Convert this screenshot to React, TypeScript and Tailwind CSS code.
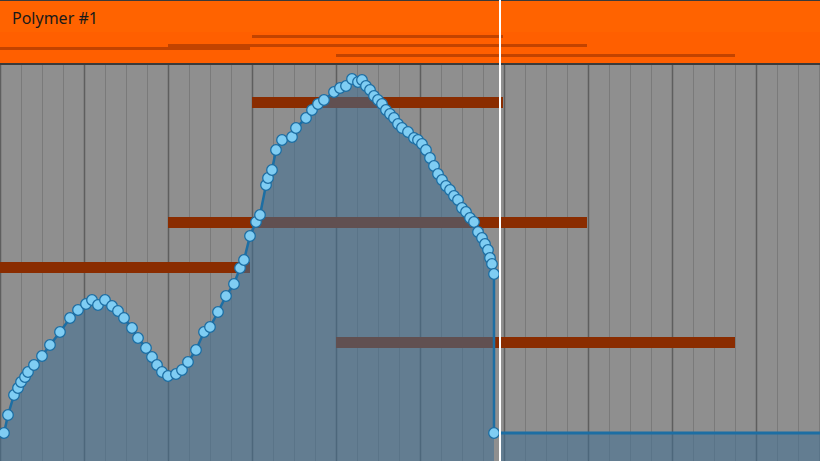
const pts: [number, number][] = [
  [4, 433], [8, 415], [14, 395], [18, 388], [21, 382], [25, 377], [28, 372], [34, 365], [42, 356], [50, 345],
  [60, 332], [70, 318], [78, 310], [86, 304], [92, 300], [98, 305], [105, 300], [112, 306], [118, 311],
  [124, 318], [132, 328], [138, 338], [146, 348], [152, 357], [157, 365], [162, 372], [168, 376], [176, 374],
  [182, 370], [188, 362], [196, 350], [204, 332], [210, 327], [218, 312], [226, 296], [234, 284], [240, 268],
  [244, 260], [250, 236], [256, 222], [260, 215], [266, 185], [268, 178], [272, 170], [276, 150], [282, 140],
  [292, 137], [296, 128], [306, 118], [312, 110], [318, 104], [324, 100], [334, 92], [340, 88], [346, 86],
  [352, 79], [358, 82], [362, 80], [366, 86], [370, 90], [374, 96], [378, 100], [382, 104], [386, 110],
  [390, 114], [394, 118], [398, 124], [402, 128], [408, 132], [414, 138], [418, 140], [422, 144], [426, 150],
  [430, 158], [434, 166], [438, 174], [442, 180], [446, 186], [450, 190], [454, 196], [458, 200], [462, 208],
  [466, 212], [470, 218], [474, 222], [478, 232], [482, 238], [485, 244], [488, 250], [490, 258], [492, 264],
  [494, 274],
];

const notes = [
  { x1: 252, x2: 503, y: 97, hy: 36 },
  { x1: 168, x2: 587, y: 217, hy: 45 },
  { x1: 0, x2: 250, y: 262, hy: 48 },
  { x1: 336, x2: 735, y: 337, hy: 55 },
];

const lines = Array.from({ length: 40 }, (_, i) => i * 21);

export default function App() {
  const line = pts.map(([x, y]) => `${x},${y}`).join(" ");
  const area = `M0,461 L0,433 L${line.split(" ").join(" L")} L494,433 L494,461 Z M500,433 L820,433 L820,461 L500,461 Z`;
  return (
    <div className="relative w-[820px] h-[461px] overflow-hidden flex flex-col bg-[#8f8f8f] font-[Lato,'Liberation_Sans',sans-serif]">
      <div className="relative h-[65px] shrink-0 border-t border-b-2 border-[#3a3a3a] bg-[#ff5f00]">
        <div className="h-[31px] bg-[#ff6300] px-3 pt-[7px] text-[16px] leading-5 text-[#1a1a1a]">Polymer #1</div>
        {notes.map((n, i) => (
          <div
            key={i}
            className="absolute h-[3px] bg-[#c24300]"
            style={{ left: n.x1, width: n.x2 - n.x1, top: n.hy - 2 }}
          />
        ))}
      </div>
      <svg width="820" height="396" viewBox="0 65 820 396" className="block">
        {lines.map((x) => (
          <line
            key={x}
            x1={x + 0.5}
            x2={x + 0.5}
            y1={65}
            y2={461}
            stroke={x % 84 === 0 ? "#5e5e5e" : "#7a7a7a"}
            strokeWidth={x % 84 === 0 ? 1.5 : 1}
          />
        ))}
        {notes.map((n, i) => (
          <rect key={i} x={n.x1} y={n.y} width={n.x2 - n.x1} height={11} fill="#8a2c00" />
        ))}
        <path d={area} fill="#3f6f94" fillOpacity={0.55} />
        <polyline points={`${line} 494,433`} fill="none" stroke="#1d6ea3" strokeWidth={2.5} />
        <line x1={494} y1={433} x2={820} y2={433} stroke="#1d6ea3" strokeWidth={3} />
        {[...pts, [494, 433] as [number, number]].map(([x, y], i) => (
          <circle key={i} cx={x} cy={y} r={5.3} fill="#7fcdf3" stroke="#1d6ea3" strokeWidth={1.3} />
        ))}
        <rect x={499} y={65} width={2} height={396} fill="#ffffff" />
      </svg>
      <div className="absolute top-0 left-[499px] w-[2px] h-[65px] bg-white" />
    </div>
  );
}
